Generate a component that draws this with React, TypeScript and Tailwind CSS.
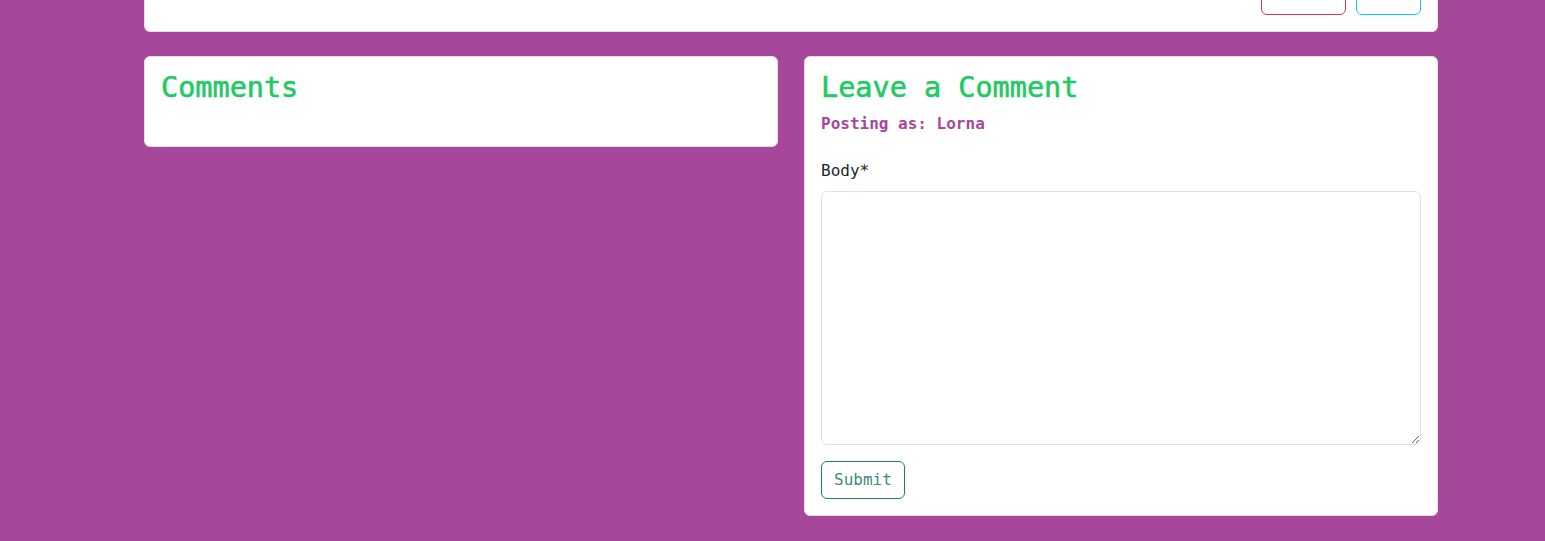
export default function App() {
  return (
    <div
      className="min-h-[541px] bg-[#a6479c] pl-[144px] pr-[107px]"
      style={{ fontFamily: '"DejaVu Sans Mono", "Liberation Mono", monospace' }}
    >
      {/* Top card (scrolled off) */}
      <div className="h-[32px] rounded-b-[6px] border border-t-0 border-[#dee2e6] bg-white px-4 flex justify-end items-end pb-4">
        <div className="flex gap-[10px]">
          <button className="h-[30px] w-[85px] rounded-[6px] border border-[#dc3545]" />
          <button className="h-[30px] w-[65px] rounded-[6px] border border-[#0dcaf0]" />
        </div>
      </div>

      <div className="mt-[24px] grid grid-cols-2 gap-[26px] items-start">
        <div className="h-[91px] rounded-[6px] border border-[#dee2e6] bg-white px-4 pt-[14px]">
          <h3 className="text-[28.5px] leading-[1.2] font-normal [-webkit-text-stroke:0.6px_#22c964] text-[#22c964]">
            Comments
          </h3>
        </div>

        <div className="rounded-[6px] border border-[#dee2e6] bg-white px-4 pt-[14px] pb-4">
          <h3 className="text-[28.5px] leading-[1.2] font-normal [-webkit-text-stroke:0.6px_#22c964] text-[#22c964]">
            Leave a Comment
          </h3>
          <p className="mt-[7px] text-[16px] font-bold leading-[24px] text-[#a6479c]">Posting as: Lorna</p>
          <form className="mt-[23px]" onSubmit={(e) => e.preventDefault()}>
            <label className="block text-[16px] leading-[24px] text-[#212529]">Body*</label>
            <textarea className="mt-[8px] block h-[254px] w-full rounded-[6px] border border-[#dee2e6] px-3 py-[6px] outline-none" />
            <button
              type="submit"
              className="mt-[16px] h-[38px] rounded-[6px] border border-[#198754] px-3 text-[16px] text-[#3d8a80]"
            >
              Submit
            </button>
          </form>
        </div>
      </div>
    </div>
  );
}
